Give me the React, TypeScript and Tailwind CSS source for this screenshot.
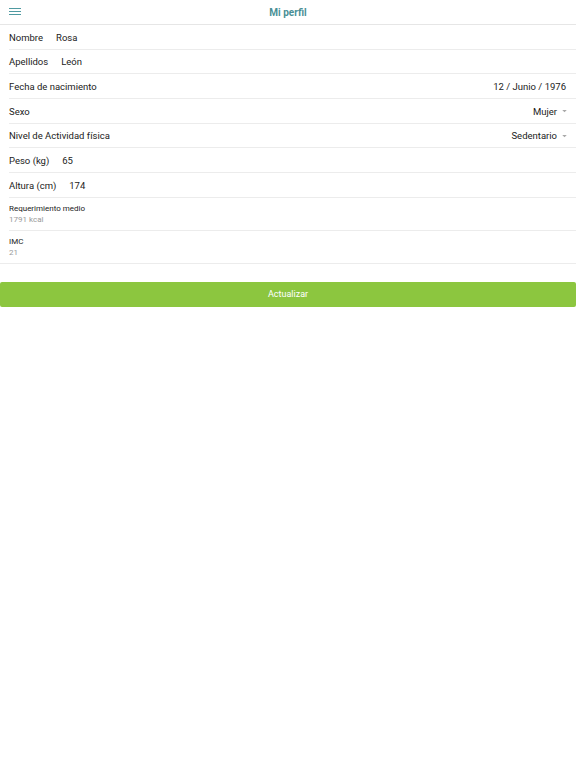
import { ReactNode } from 'react';

// Plain text row: label followed by its value
const InfoRow = ({ label, value }: { label: string; value: string }) => (
  <div className="ml-[9px] flex h-[24.7px] items-center gap-[13px] border-b border-[#ececec] pt-[2px] text-[9.5px] text-[#222]">
    <span>{label}</span>
    <span>{value}</span>
  </div>
);

// Row with the value pushed to the right edge
const RightRow = ({ label, children }: { label: string; children: ReactNode }) => (
  <div className="ml-[9px] flex h-[24.7px] items-center justify-between border-b border-[#ececec] pr-[9px] pt-[2px] text-[9.5px] text-[#222]">
    <span>{label}</span>
    {children}
  </div>
);

const Caret = () => (
  <svg width="5" height="3" viewBox="0 0 6 4" className="ml-[5px]">
    <path d="M0 0h6L3 3z" fill="#a8a8a8" />
  </svg>
);

const App = () => {
  return (
    <div className="min-h-[768px] w-full bg-white font-['Roboto',sans-serif]">
      {/* Header */}
      <div className="relative flex h-[25px] items-center justify-center border-b border-[#e6e6e6]">
        <button className="absolute left-[9px] top-[8px] flex w-[12px] flex-col gap-[2px]">
          <span className="h-px w-full bg-[#4f9aa1]" />
          <span className="h-px w-full bg-[#4f9aa1]" />
          <span className="h-px w-full bg-[#4f9aa1]" />
        </button>
        <span className="text-[10px] font-bold text-[#4a8f96]">Mi perfil</span>
      </div>

      {/* Profile fields */}
      <InfoRow label="Nombre" value="Rosa" />
      <InfoRow label="Apellidos" value="León" />
      <RightRow label="Fecha de nacimiento">
        <span className="pr-px">12 / Junio / 1976</span>
      </RightRow>
      <RightRow label="Sexo">
        <span className="flex items-center">
          Mujer
          <Caret />
        </span>
      </RightRow>
      <RightRow label="Nivel de Actividad física">
        <span className="flex items-center">
          Sedentario
          <Caret />
        </span>
      </RightRow>
      <InfoRow label="Peso (kg)" value="65" />
      <InfoRow label="Altura (cm)" value="174" />

      <div className="ml-[9px] flex h-[33px] flex-col justify-center border-b border-[#ececec] pt-[1px] leading-[11px]">
        <span className="text-[8px] text-[#222]">Requerimiento medio</span>
        <span className="text-[8px] text-[#9a9a9a]">1791 kcal</span>
      </div>
      <div className="flex h-[33px] flex-col justify-center border-b border-[#ececec] pl-[9px] pt-[1px] leading-[11px]">
        <span className="text-[8px] text-[#222]">IMC</span>
        <span className="text-[8px] text-[#9a9a9a]">21</span>
      </div>

      {/* Submit */}
      <div className="pt-[18px]">
        <button className="flex h-[25px] w-full items-center justify-center rounded-[2px] bg-[#8cc63f] text-[9px] text-white">
          Actualizar
        </button>
      </div>
    </div>
  );
};

export default App;
